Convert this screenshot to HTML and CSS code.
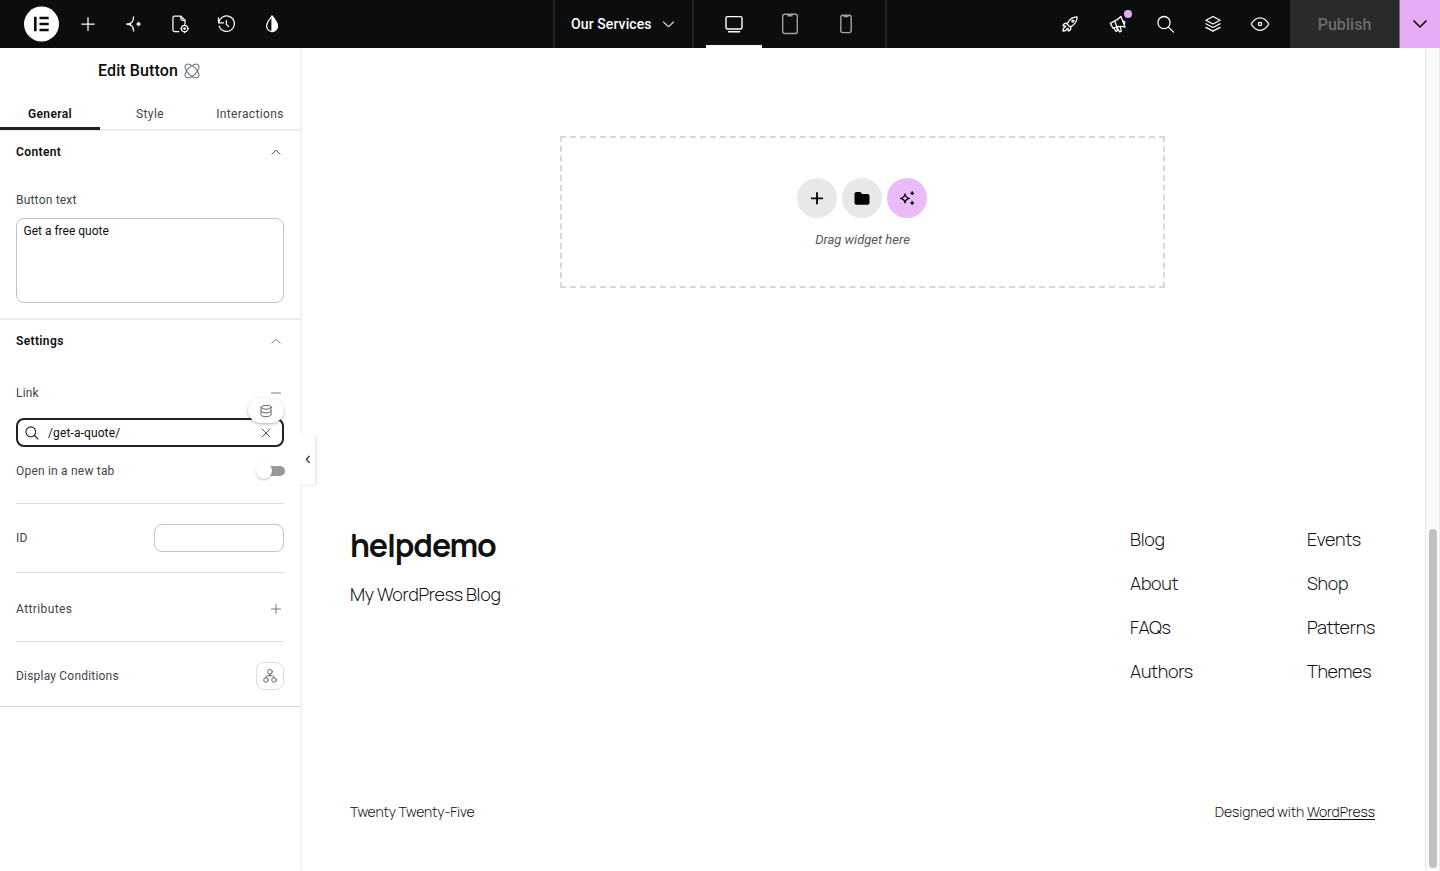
FILE: index.html
```html
<!DOCTYPE html>
<html lang="en">
<head>
  <meta charset="UTF-8">
  <meta name="viewport" content="width=device-width, initial-scale=1.0">
  <title>Edit Button - Our Services</title>
  <link rel="stylesheet" href="styles.css">
</head>
<body>
  <header class="topbar">
    <div class="topbar-left">
      <div class="logo">
        <svg width="36" height="36" viewBox="0 0 36 36"><circle cx="18.500" cy="18" r="17.500" fill="#fff"/><path d="M11 10.700h2.600v14.600H11zM16.500 10.700h9.200v2.500h-9.200zM16.500 16.700h9.200v2.500h-9.200zM16.500 22.800h9.200v2.500h-9.200z" fill="#0c0d0e"/></svg>
      </div>
      <button class="tool"><svg viewBox="0 0 24 24"><path d="M12 4.500v15M4.500 12h15"/></svg></button>
      <button class="tool"><svg viewBox="0 0 24 24"><path d="M11.500 3.500c0 5-3 8.500-8.500 8.500 5.500 0 8.500 3.500 8.500 8.500M4 12h4"/><path d="M17.500 10l.7 1.300 1.300.7-1.300.7-.7 1.300-.7-1.300-1.300-.7 1.300-.7z" fill="#fff"/></svg></button>
      <button class="tool"><svg viewBox="0 0 24 24"><path d="M10.500 21H5.500a2 2 0 0 1-2-2V4.500a2 2 0 0 1 2-2H13l5 5v4M13 2.500v3a2 2 0 0 0 2 2h3"/><circle cx="17.500" cy="17.500" r="3.800"/><circle cx="17.500" cy="17.500" r="1"/><path d="M17.500 12.800v.9M17.500 21.300v.9M12.800 17.500h.9M21.300 17.500h.9"/></svg></button>
      <button class="tool"><svg viewBox="0 0 24 24"><path d="M12.500 8v4.500l2.500 2.500M3.500 10.500a9.300 9.300 0 1 1 .4 4M3 4.500v6h6"/></svg></button>
      <button class="tool"><svg viewBox="0 0 24 24"><path d="M12 2.500c-3.500 4.500-6.500 8-6.500 12a6.500 6.500 0 0 0 13 0c0-4-3-7.500-6.500-12z"/><path d="M12 2.500c3.500 4.500 6.500 8 6.500 12a6.500 6.500 0 0 1-6.500 6.500z" fill="#fff"/></svg></button>
    </div>
    <div class="topbar-center">
      <button class="page-name">Our Services
        <svg width="14" height="10" viewBox="0 0 14 10"><path d="M2.500 3l5 4.700L12.500 3"/></svg>
      </button>
      <div class="devices">
        <button class="device active"><svg width="20" height="20" viewBox="0 0 20 20"><rect x="2" y="2.600" width="16" height="12.400" rx="1.500"/><path d="M4.500 17.700h11"/></svg></button>
        <button class="device"><svg width="18" height="22" viewBox="0 0 18 22"><rect x="1.700" y="1.200" width="14.600" height="19.300" rx="2"/><path d="M7 2.700h4"/></svg></button>
        <button class="device"><svg width="14" height="22" viewBox="0 0 14 22"><rect x="1.800" y="2.200" width="10.400" height="17.400" rx="2"/><path d="M5 3.600h4"/></svg></button>
      </div>
    </div>
    <div class="topbar-right">
      <button class="tool"><svg viewBox="0 0 24 24"><path d="M8.500 12C11 6.500 14.500 3.500 20.500 3.500c0 6-3 9.500-8.500 12zM8.500 12l3.500 3.500M9 11c-2.500-.5-4.500.5-5.500 3l3.500.5M13 15c.5 2.500-.5 4.500-3 5.500L9.500 17M6.500 15.500c-2 .5-3 2.500-3 5 2.500 0 4.500-1 5-3"/><circle cx="15.500" cy="8.500" r="1.300"/></svg></button>
      <button class="tool"><svg viewBox="0 0 24 24"><path d="M15.500 3l5 12.800c-4-1.500-7-1.500-11.500.2l-3 1-3.300-5.800 3.300-1.700c4.200-2 7-3.500 9.500-6.500zM8 8.500l2.800 7M18 8.200c2 .2 3 2.300 1.500 4M7 16.800l2.500 4 2-.8-1.300-4.500M11 16.500l3 5 2-1-1.500-5.500"/></svg><span class="dot"></span></button>
      <button class="tool"><svg viewBox="0 0 24 24"><circle cx="10.800" cy="10.300" r="7.300"/><path d="M16.200 15.700l6 6"/></svg></button>
      <button class="tool"><svg viewBox="0 0 24 24"><path d="M12 3l8.500 4.500L12 12 3.500 7.500zM3.500 11.700l8.500 4.500 8.500-4.500M3.500 16l8.500 4.500 8.500-4.500"/></svg></button>
      <button class="tool"><svg viewBox="0 0 24 24"><path d="M1.500 12c5.500-10 15.500-10 21 0-5.500 10-15.500 10-21 0z"/><circle cx="12" cy="12" r="2"/></svg></button>
      <button class="publish">Publish</button>
      <button class="publish-more"><svg width="16" height="10" viewBox="0 0 16 10"><path d="M2 2l6 6 6-6"/></svg></button>
    </div>
  </header>

  <div class="editor">
    <aside class="panel">
      <h1 class="panel-title">Edit Button
        <svg width="16" height="16" viewBox="0 0 16 16"><ellipse cx="8" cy="8" rx="8.800" ry="4.300" transform="rotate(45 8 8)"/><ellipse cx="8" cy="8" rx="8.800" ry="4.300" transform="rotate(-45 8 8)"/></svg>
      </h1>
      <nav class="tabs">
        <a class="tab selected">General</a>
        <a class="tab">Style</a>
        <a class="tab">Interactions</a>
      </nav>

      <section class="section content-section">
        <h2 class="section-head">Content
          <svg class="chevron" width="16" height="10" viewBox="0 0 16 10"><path d="M4 7.200l4-4 4 4"/></svg>
        </h2>
        <label class="field-label" for="buttonText">Button text</label>
        <textarea id="buttonText" class="text-box">Get a free quote</textarea>
      </section>

      <section class="section settings-section">
        <h2 class="section-head">Settings
          <svg class="chevron light" width="16" height="10" viewBox="0 0 16 10"><path d="M4 7.200l4-4 4 4"/></svg>
        </h2>
        <div class="row link-row">Link
          <svg class="mark" width="16" height="16" viewBox="0 0 16 16"><path d="M3.500 8h9"/></svg>
        </div>
        <div class="link-field">
          <svg width="16" height="16" viewBox="0 0 16 16"><circle cx="6.800" cy="6.800" r="4.900"/><path d="M10.500 10.500l3.500 3.500"/></svg>
          <input class="link-input" type="text" value="/get-a-quote/">
          <svg class="clear" width="12" height="12" viewBox="0 0 12 12"><path d="M2 2l8 8M10 2l-8 8"/></svg>
          <span class="dynamic-tag"><svg width="14" height="14" viewBox="0 0 14 14"><ellipse cx="7" cy="3.300" rx="5" ry="1.900"/><path d="M2 3.300v7.500c0 1 2.200 1.900 5 1.900s5-.9 5-1.900V3.300M2 7c0 1 2.200 1.900 5 1.900S12 8 12 7"/></svg></span>
        </div>
        <div class="row toggle-row">Open in a new tab
          <span class="toggle"><span class="knob"></span></span>
        </div>
        <div class="row id-row">ID
          <input class="id-input" type="text">
        </div>
        <div class="row attr-row">Attributes
          <svg class="mark" width="16" height="16" viewBox="0 0 16 16"><path d="M3.500 8h9M8 3.500v9"/></svg>
        </div>
        <div class="row cond-row">Display Conditions
          <button class="cond-button"><svg width="16" height="16" viewBox="0 0 16 16"><circle cx="8" cy="3.800" r="2.300"/><circle cx="4" cy="12" r="2.300"/><circle cx="12" cy="12" r="2.300"/><path d="M8 6.100v1.700M4 9.700c0-1.400.5-1.900 1.500-1.900h5c1 0 1.500.5 1.500 1.900"/></svg></button>
        </div>
      </section>
      <button class="collapse"><svg width="8" height="10" viewBox="0 0 8 10"><path d="M5.200 2.200L2.300 5.300l2.900 3.100"/></svg></button>
    </aside>

    <main class="canvas">
      <div class="drop-area">
        <div class="drop-buttons">
          <button class="round"><svg width="20" height="20" viewBox="0 0 20 20"><path d="M10 5v10.600M4.700 10.300h10.600" stroke="#000" stroke-width="1.800" stroke-linecap="round"/></svg></button>
          <button class="round"><svg width="20" height="20" viewBox="0 0 20 20"><path d="M4.500 4h3.300c.6 0 1 .3 1.400.8l.9 1.200h5.400c1.200 0 2 .8 2 2v6.700c0 1.200-.8 2-2 2h-11c-1.200 0-2-.8-2-2V6c0-1.200.8-2 2-2z" fill="#000"/></svg></button>
          <button class="round ai"><svg width="20" height="20" viewBox="0 0 20 20"><path d="M8 6c.5 2.800 1.600 3.900 4.400 4.400-2.800.5-3.900 1.600-4.400 4.400-.5-2.800-1.600-3.900-4.400-4.400 2.800-.5 3.900-1.600 4.400-4.400z" fill="none" stroke="#000" stroke-width="1.300" stroke-linejoin="round"/><path d="M15.200 3.300l.7 1.300 1.300.7-1.300.7-.7 1.300-.7-1.300-1.300-.7 1.300-.7zM15.200 13l.7 1.300 1.300.7-1.300.7-.7 1.300-.7-1.300-1.300-.7 1.300-.7z" fill="#000" stroke="#000" stroke-width=".4"/></svg></button>
        </div>
        <p class="drop-text">Drag widget here</p>
      </div>

      <footer class="site-footer">
        <div class="footer-top">
          <div class="brand">
            <h3 class="site-name">helpdemo</h3>
            <p class="tagline">My WordPress Blog</p>
          </div>
          <ul class="links first">
            <li>Blog</li>
            <li>About</li>
            <li>FAQs</li>
            <li>Authors</li>
          </ul>
          <ul class="links">
            <li>Events</li>
            <li>Shop</li>
            <li>Patterns</li>
            <li>Themes</li>
          </ul>
        </div>
        <div class="footer-bottom">
          <p>Twenty Twenty-Five</p>
          <p>Designed with <a class="wp" href="#">WordPress</a></p>
        </div>
      </footer>
    </main>
    <div class="scrollbar"><div class="thumb"></div></div>
  </div>
</body>
</html>
```
FILE: styles.css
```css
* { margin: 0; padding: 0; box-sizing: border-box; }
body {
  height: 871px;
  overflow: hidden;
  font-family: Roboto, sans-serif;
  background-color: #fff;
  color: #0c0d0e;
}
button { border: none; background: none; font-family: inherit; cursor: pointer; }
svg { display: block; fill: none; stroke-linecap: round; stroke-linejoin: round; }

/* top bar */
.topbar {
  height: 48px;
  display: grid;
  grid-template-columns: 553px 334px 1fr;
  background-color: #0c0d0e;
}
.topbar-left { display: flex; align-items: center; padding-left: 23px; }
.logo { margin-right: 6px; }
.logo svg { stroke: none; }
.tool {
  position: relative;
  width: 46px; height: 48px;
  display: flex;
  justify-content: center;
  align-items: center;
}
.tool svg { width: 20px; height: 20px; stroke: #fff; stroke-width: 1.5; }
.topbar-center {
  display: flex;
  border-left: 2px solid #1f2124;
  border-right: 2px solid #1f2124;
}
.page-name {
  width: 139px;
  display: flex;
  align-items: center;
  justify-content: space-between;
  padding: 0 17px 0 16px;
  border-right: 2px solid #1f2124;
  color: #fff;
  font-size: 14px; font-weight: 500; letter-spacing: 0.1px;
}
.page-name svg { stroke: #ccc; stroke-width: 1.2; }
.devices { display: flex; padding-left: 11.5px; }
.device {
  width: 56px; height: 48px;
  display: flex;
  justify-content: center;
  align-items: center;
  border-bottom: 3px solid transparent;
  border-top: 3px solid transparent;
}
.device svg { stroke: #a0a1a3; stroke-width: 1.4; }
.device.active { border-bottom-color: #fff; }
.device.active svg { stroke: #fff; }
.topbar-right { display: flex; justify-content: flex-end; }
.topbar-right .tool { width: 47.5px; }
.dot {
  position: absolute;
  top: 10px; right: 10px;
  width: 8px; height: 8px;
  border-radius: 50%;
  background-color: #e6adf6;
}
.publish {
  width: 110px;
  margin-left: 6px;
  background-color: #2a2a2a;
  border-right: 1px solid #77657c;
  color: #6b6b6c;
  font-size: 16px; font-weight: 500; letter-spacing: 0.05px;
}
.publish-more {
  width: 40px;
  display: flex;
  justify-content: center;
  align-items: center;
  background-color: #e6adf6;
}
.publish-more svg { stroke: #0c0d0e; stroke-width: 1.7; }

/* side panel */
.editor { display: flex; height: 823px; }
.panel {
  position: relative;
  z-index: 1;
  width: 300px;
  box-shadow: 0 0 4px rgba(0, 0, 0, 0.14);
  clip-path: inset(0 -20px 0 0);
}
.panel-title {
  height: 50px;
  display: flex;
  justify-content: center;
  align-items: center;
  gap: 6px;
  padding-bottom: 5px;
  padding-right: 2px;
  font-size: 16px; font-weight: 500; letter-spacing: 0.1px;
}
.panel-title svg { stroke: #69727d; stroke-width: 1.1; }
.tabs {
  height: 33px;
  display: flex;
  border-bottom: 2px solid #ececed;
}
.tab {
  width: 100px; height: 32px;
  line-height: 32px;
  text-align: center;
  color: #3f444b;
  font-size: 12px; letter-spacing: 0.35px;
}
.tab.selected {
  border-bottom: 3px solid #1f2124;
  color: #0c0d0e;
  font-weight: 600;
}
.section { padding: 0 16px; }
.content-section { height: 189px; border-bottom: 2px solid #ececed; }
.settings-section { border-bottom: 1px solid #d8d9db; }
.section-head {
  height: 42px;
  display: flex;
  justify-content: space-between;
  align-items: center;
  font-size: 12px; font-weight: 600; letter-spacing: 0.38px;
}
.chevron { stroke: #3f444b; stroke-width: 1; }
.chevron.light { stroke: #77797c; }
.field-label, .row {
  color: #3f444b;
  font-size: 12px; letter-spacing: 0.2px;
}
.field-label {
  display: block;
  line-height: 24px;
  padding-top: 15px;
}
.text-box {
  display: block;
  width: 268px; height: 85px;
  margin-top: 5.500px;
  padding: 5.500px 6.500px;
  border: 1px solid #c1c3cb; border-radius: 8px;
  resize: none;
  color: #0c0d0e;
  font: 12px/14px Roboto, sans-serif;
  letter-spacing: 0;
}
.row {
  display: flex;
  justify-content: space-between;
  align-items: center;
}
.mark { stroke: #77797c; stroke-width: 1; }
.link-row { height: 24px; margin-top: 19px; }
.link-field {
  position: relative;
  height: 29px;
  margin-top: 13px;
  display: flex;
  align-items: center;
  padding: 0 10px 0 6px;
  border: 2px solid #1f2124; border-radius: 8px;
}
.link-field svg { stroke: #1f2124; stroke-width: 1.1; }
.link-field .clear { stroke: #55585c; stroke-width: 1; }
.link-input {
  flex: 1;
  min-width: 0;
  margin-left: 8px;
  border: none; outline: none;
  background: none;
  font: 12px Roboto, sans-serif; letter-spacing: 0.12px;
  color: #0c0d0e;
}
.dynamic-tag {
  position: absolute;
  top: -22px; right: -2px;
  width: 36px; height: 25px;
  display: flex;
  justify-content: center;
  align-items: center;
  border-radius: 13px;
  background-color: #fff;
  box-shadow: 0 1px 3px rgba(0, 0, 0, 0.3);
}
.link-field .dynamic-tag svg { stroke: #55585c; stroke-width: 0.9; }
.toggle-row { height: 57px; padding-bottom: 9px; border-bottom: 1px solid #dcdddf; }
.toggle {
  width: 25px; height: 10px;
  display: flex;
  align-items: center;
  margin-right: -1px;
  border-radius: 5px;
  background-color: #999;
}
.knob {
  width: 16px; height: 16px;
  flex-shrink: 0;
  margin-left: -4px;
  border-radius: 50%;
  background-color: #fff;
  box-shadow: 0 1px 2px rgba(0, 0, 0, 0.25);
}
.id-row { height: 69px; border-bottom: 1px solid #dcdddf; }
.id-input {
  width: 130px; height: 28px;
  border: 1px solid #c2c3c6; border-radius: 8px;
}
.attr-row { height: 69px; padding-top: 4px; border-bottom: 1px solid #dcdddf; letter-spacing: 0.4px; }
.cond-row { height: 64px; padding-top: 4px; }
.cond-button {
  width: 28px; height: 28px;
  display: flex;
  justify-content: center;
  align-items: center;
  border: 1px solid #dcdddf; border-radius: 8px;
}
.cond-button svg { stroke: #55585c; stroke-width: 0.9; }
.collapse {
  position: absolute;
  top: 386px; left: 300px;
  width: 15px; height: 50px;
  display: flex;
  justify-content: center;
  align-items: center;
  background-color: #fff;
  box-shadow: 2px 1px 3px rgba(0, 0, 0, 0.09);
}
.collapse svg { stroke: #3f444b; stroke-width: 1.4; }

/* canvas */
.canvas { flex: 1; padding: 88px 50px 0; }
.drop-area {
  width: 605px; height: 152px;
  margin: 0 auto;
  padding-top: 40px;
  border: 2px dashed #d5d8dc;
}
.drop-buttons { display: flex; justify-content: center; gap: 5px; padding-right: 1px; }
.round {
  width: 40px; height: 40px;
  display: flex;
  justify-content: center;
  align-items: center;
  border-radius: 50%;
  background-color: #e6e8ea;
}
.round.ai { background-color: #ebbbf9; }
.drop-text {
  margin-top: 13px;
  text-align: center;
  color: #515962;
  font-size: 13px; font-style: italic; line-height: 17px;
}

/* theme footer */
.site-footer {
  margin-top: 235px;
  font-family: Manrope, Inter, sans-serif;
  font-weight: 300;
  color: #111;
}
.footer-top { display: flex; height: 278px; }
.brand { flex: 1; }
.site-name {
  line-height: 44px;
  font-size: 32px; font-weight: 700; letter-spacing: -1.15px;
}
.tagline {
  margin-top: 13px;
  line-height: 28px;
  font-size: 18px; letter-spacing: -0.31px;
}
.links {
  width: 68px;
  list-style: none;
  font-size: 18px; line-height: 28px; letter-spacing: -0.3px;
  padding-top: 2px;
}
.links.first { width: 63px; margin-right: 114px; }
.links li { margin-bottom: 16px; white-space: nowrap; }
.footer-bottom {
  display: flex;
  justify-content: space-between;
  line-height: 22px;
  font-size: 14px; letter-spacing: -0.08px;
}
.wp { color: inherit; text-decoration: underline; text-underline-offset: 2px; }

.scrollbar {
  width: 15px;
  padding: 481px 3px 0;
  border-left: 1px solid #e8e8e8;
  border-right: 1px solid #ededed;
  background-color: #fafafa;
}
.thumb { width: 8px; height: 339px; border-radius: 4px; background-color: #c1c1c1; }
```
